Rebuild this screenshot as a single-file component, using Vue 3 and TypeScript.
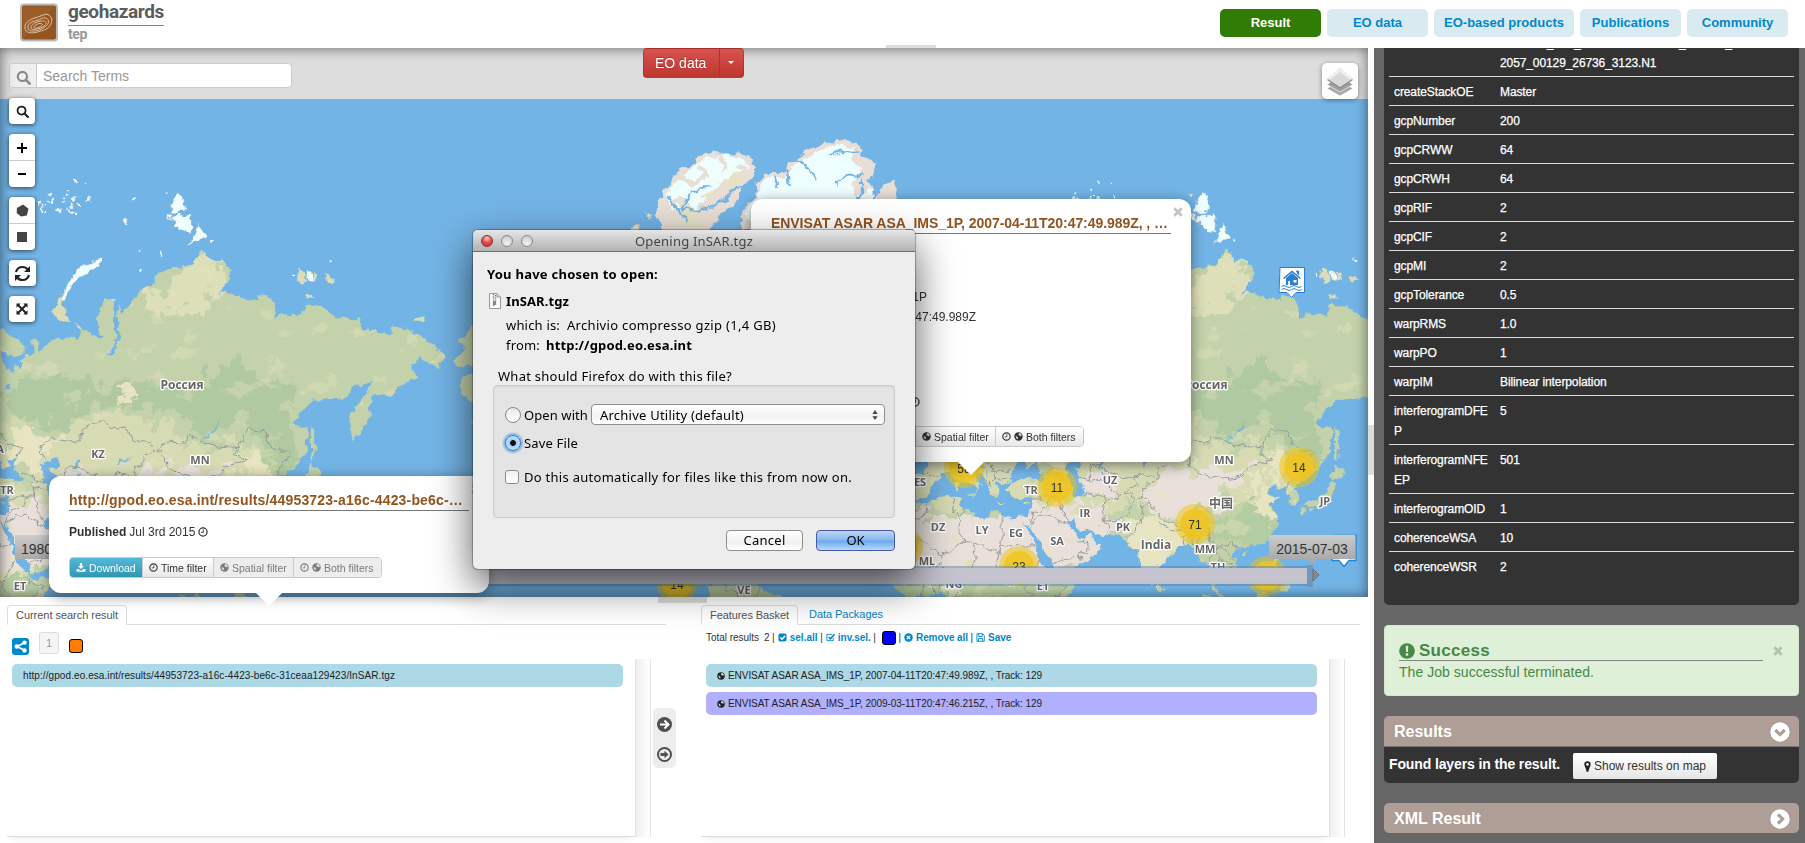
<script setup lang="ts">
type Pt = [number, number]

/* Web-Mercator projection at zoom level 2 (the world is 1024px wide). */
const WORLD = 1024
const ORIGIN_X = -93
const EQUATOR_Y = 610
const project = ([lon, lat]: Pt): string => {
  const x = ORIGIN_X + (lon * WORLD) / 360
  const rad = (lat * Math.PI) / 180
  const y = EQUATOR_Y - (WORLD / (2 * Math.PI)) * Math.log(Math.tan(Math.PI / 4 + rad / 2))
  return `${x.toFixed(1)},${y.toFixed(1)}`
}
const parse = (s: string): Pt[] => s.trim().split(/\s+/).map((p) => p.split(',').map(Number) as Pt)
const area = (s: string): string => 'M' + parse(s).map(project).join('L') + 'Z'
const line = (s: string): string => 'M' + parse(s).map(project).join('L')

const landSrc = [
  // Eurasia and Africa
  `20,69.8 25,71 31,70 36,69.2 41,67.8 41,66.6 38,66.1 34,66.7 32.5,67 34,65.5 35,64.3 38,63.9 37,65 40,64.6 40.5,65 39.8,65.6 42,66.4 44,66.1 44.2,67 43.5,68.5 46,68.2 46.5,67.8 45.5,66.9 47.5,66.9 49,67.8 53,68.6 54.5,68.3 58,68.9 60,68.4 61,69 60.5,69.8 64.5,69.3 68,68.4 69,69 67,69.6 66.8,71 68.5,72.5 70,73.2 72.8,72.8 72.5,71 73.5,68.3 71.5,66.6 69,66.3 72,66.2 74,67.2 74.5,68.5 74.3,70.5 73.5,71.5 75,72.7 75.5,71.5 78,72.3 80.5,73.6 87,74.7 87,75.2 93,76 100,76.3 104,77.6 107,76.6 111,76.7 113.7,75.8 113,75 109,73.6 106,73 110.5,73.9 114,73.6 119,73.1 123.5,73 123,73.7 127,73.5 129,72.3 129.5,71 132,71.6 134,71.4 139.5,71.5 140,72.5 146,72.3 152,71 159,70.9 160,69.7 165,69.6 170,69 170.5,70.1 176,69.8 180,69 185,67.8 190,66.1 188,65.6 187,64.3 182,65.3 180.8,66.2 179,65 177.5,64.7 179.5,62.8 177,62.5 174,61.7 170.5,60 166,60 163.2,59.8 162,57.9 163.2,56.1 161.8,55 160,53.2 158.5,52.2 156.7,51 155.7,53.5 155.6,56.8 158,58 161.8,60.3 164,62.5 160.3,61.8 156.8,61.6 154.3,59.6 149,59.4 142.5,59.2 137.5,56.3 135.2,54.7 138,53.8 140.5,53.9 141.3,52.8 140.5,50.5 140.4,48.5 138.3,46.3 135.5,43.8 132.5,42.9 130.7,42.3 129.7,41 127.5,39.7 129.3,37 129.3,35.4 126.5,34.4 126.5,37 125,38 125,39.6 121.5,38.9 122,40.6 118,39 119,37.3 122.5,37.2 119.3,35 121.8,32 121.8,30.8 122,29 119.5,25.5 116.8,23.1 113.8,22.3 110.5,21.2 108.3,21.6 106,19 107,17 109.2,13 109,11.6 106.8,10.4 105,8.8 105,10.2 102.6,12 100.9,13.4 100,13 99.3,10 100.3,8.3 103.3,4.5 104,1.4 101.3,2.8 100.2,6.3 98.4,8 98.7,11 97.7,15.5 96.5,17 94.5,16 94.3,18.5 92,21.5 90.5,22.6 87,21.5 85,19.5 82.3,16.6 80.2,15.2 80,12 79.8,10.3 78.2,8.9 77.5,8.1 76.3,10 74.5,14 73,17.5 72.8,21 70.8,20.8 69,22.3 70,22.8 67,24.8 61.6,25.2 57.5,25.7 56.8,27.1 54,26.6 51.5,27.9 50,30.2 48,30 48.5,28 50.2,26.6 50.8,24.8 51.2,26 51.6,25 54,24.1 56.3,26.2 56.8,24.3 59.8,22.5 57.8,19 55,17 52,15.6 45,12.8 43.3,12.7 42.8,16 39.1,21.2 37,25 35,28 34.9,29.5 34.2,27.8 32.6,29.9 33.8,27.2 35.7,24 37.2,21 37.4,18.8 39.7,15.3 43.2,12 43.3,11.5 44.5,10.4 51.3,11.8 50.8,9.5 47.8,4.5 43,0 41,-2 40,-4 9,-4 9.3,1 9.7,3.9 8.5,4.6 6,4.3 4.5,6.3 1.2,6.1 -2,4.8 -4.5,5.2 -7.5,4.4 -9.5,5.8 -11.5,6.9 -13.2,9 -15,11 -16.8,12.5 -17.4,14.7 -16.3,17 -17,21 -16,23.7 -13,27.7 -9.8,29.8 -9.8,31.5 -6.8,34 -5.5,35.9 -2,35.1 3,36.9 10,37.3 11,36.8 10.3,34.3 11.2,33.3 15,32.4 16,31.2 19,30.3 20.1,31.2 21.8,32.9 25,31.6 29,30.9 31,31.5 34.2,31.3 35.2,33 35.9,35.5 36,36.9 32.6,36.1 30.6,36.8 28.2,36.7 26.3,39.5 29,40.5 29.3,41.2 35,42 38.3,41 41.5,41.5 38,44.3 37,45.3 39,47.2 35,46.3 36.3,45.3 33.6,44.5 33,46 30.8,46.6 28.7,44 28,41.9 29,41.1 26,40.3 24,40.8 22.9,40.5 24,38 22.8,36.6 21.5,37.5 19.4,40.5 19.5,41.9 15.3,44 13.6,45.4 12.4,44.5 14,42.4 16.2,41.8 18.4,40 16.8,40.4 16.4,38.7 15.7,38 16,39.5 12.5,41.5 10.3,43.7 7.5,43.8 3.2,43.2 3.2,41.9 -0.3,39.5 -0.5,37.8 -2,36.7 -5.5,36.1 -8.9,37 -9.4,38.7 -8.9,43 -1.7,43.4 -1.2,46 -4.5,48.4 2,51 8,54 10,57 12,54.5 20,55 24,59`,
  // Americas
  `-168,65.6 -163,67 -166,68.3 -157,71.3 -128,70 -95,68 -80,62 -56,52 -70,42 -81,30 -98,26 -88,16 -83.2,15 -83.5,11 -81.5,9 -79.5,9.5 -77,8.5 -75,11 -71.5,12.3 -68,10.8 -62,10.7 -60,8.5 -57,6 -52,5 -51,0 -79,0 -77.3,4 -77.5,7 -79.5,8.4 -83,8.3 -85.7,11 -87.5,13 -92,14.5 -105,20 -125,40 -135,58 -150,60 -157.5,55.8 -162,55 -157.5,58.8 -162,58.7 -165,60.5 -166,61.7 -164.5,63 -161,64 -161,64.8 -166.5,64.6`,
  // Sakhalin, Hokkaido, Honshu, Kyushu
  '142,54.3 143.3,53 143,50.5 144.5,49 143,49.2 142.8,46.6 142,46 142,49 142,52.5',
  '141.8,45.4 145,44 145.5,43.2 143.3,42 140.3,42 140.3,43.2 141.6,43.3',
  '141.3,41.4 142,39.5 140.9,38 140.7,35.7 138.8,34.7 135.8,33.6 135,34.6 131,34 132.5,35.4 136,35.8 137,37.3 139.5,38.5 140,40.5',
  '130,33.7 131.8,33.5 131.3,31.4 130.2,31.3',
  '132.5,33.8 134.4,34.2 134,33.3 132.8,32.8',
  // Taiwan, Hainan, Luzon, Mindanao, Borneo, Sumatra, Sri Lanka
  '121.5,25.2 121.8,24.5 120.9,22 120.2,23',
  '109,19.9 110.8,20 110,18.5 108.8,18.8',
  '120.6,18.4 122.2,18.4 121.5,16 123.8,13.5 123.8,12.8 121,13.8 120.2,15',
  '122,7 123.5,8.6 125.4,9.7 126.4,7.5 125.5,6 124,6.8',
  '122.2,11.5 123,11.2 124.4,12 125.3,11.5 124.8,10.2 123.3,9.5 122.3,10.2',
  '117.2,8.4 119.4,11.2 119.2,10.5 117.7,8.6',
  '109,1.5 113,3.2 117,7 119,5.2 117.8,3 118,0 109,0',
  '95.3,5.6 97.5,5.2 103,0 99,0',
  '80,9.7 81.8,7.5 80.6,6 79.8,7.8',
  // Mediterranean islands
  '12.5,38 15.6,38.2 15.1,36.7',
  '8.2,40.9 9.7,40.9 9.5,39.1 8.5,39',
  '8.6,42.4 9.4,43 9.4,41.5',
  '23.6,35.5 26.3,35.2 24.8,34.9',
  '32.4,35 34.5,35.6 33.5,34.7',
]
const land = landSrc.map(area).join('')

const terrain: { fill: string; d: string }[] = [
  { fill: '#b0c9a0', src: '33,60 45,64 60,63 75,62 90,61 105,62 110,64 116,68 119,66 120,63 135,62 135,50 139,46 131,42.8 128,48 124,53 115,55 105,52 98,56 85,58 75,58 60,58 57,53 50,55 38,56' },
  { fill: '#d6dbb4', src: '-12,48 20,50 40,50 55,54 75,57 90,55 100,50 115,51 125,48 129,40 124,34 110,34 104,38 90,44 75,35 45,33 30,36 -12,34' },
  { fill: '#e7e4c1', src: '33,52 45,53 57,52 50,47 42,44 36,46' },
  { fill: '#e7e4c1', src: '68,30 78,32 88,26 92,24 86,20 80,8 72,8' },
  { fill: '#e7e4c1', src: '113,40 122,42 124,30 113,30' },
  { fill: '#e7e4c1', src: '118,48 126,48 127,43 120,43' },
  { fill: '#e7e4c1', src: '72,60 78,61 80,59 74,58' },
  { fill: '#dcdfb8', src: '86,73 95,76 105,78 114,76 112,74 100,72 88,71' },
  { fill: '#dfe0ba', src: '-18,17 40,17 44,8 -18,10' },
  { fill: '#e8e0d9', src: '-18,17.5 -4,15 40,15 60,14 62,25 60,34 47,36 36,34 20,32 5,34 -9,29 -18,22' },
  { fill: '#e8e0d9', src: '75,41 88,45 98,44 112,45 108,40 104,38 100,33 88,28.5 78,32 74,37' },
  { fill: '#e8e0d9', src: '53,44 62,44 68,43 64,38 54,38' },
  { fill: '#e8e0d9', src: '58,26 67,26 67,31 60,36 52,34' },
  { fill: '#b4cca2', src: '104,33 112,34 121,30 121,24 108,21 98,20 97,28' },
  { fill: '#c0d1a7', src: '94,26 110,22 110,8 98,6' },
  { fill: '#b8cda3', src: '-18,9.5 30,9 45,7 45,-5 -18,-5' },
  { fill: '#b4cca2', src: '35,14 42,13 42,6 35,5' },
  { fill: '#c4d2ab', src: '125,41 130,42 130,34 126,34' },
  { fill: '#c4d2ab', src: '40,44 49,41 50,38 47,38 38,41' },
  { fill: '#b4cca2', src: '-90,15 -77,9 -50,5 -50,-5 -85,-5' },
].map((t) => ({ fill: t.fill, d: area(t.src) }))

const lakes = [
  '47,45 51,47 53,46.8 53,45 50.3,44.5 52.5,42 54,40 54,37 50,37.4 49,40 47.5,43',
  '104,51.5 107,52.3 109.7,55.6 109,53.2 106,51.6',
  '74,45.5 74.5,46.7 79,46.6 75.5,46.2 74.5,45',
  '58.5,45 60,46.5 61.5,46.3 60,45.6 59.5,44',
  '34.5,61 35.8,62.3 36,61',
  '60,42.8 60.4,43.6 61,43',
].map(area).join('')

const borders = [
  '46.5,48.5 47,50 51,51.6 55,51 58,51 61,51 61.5,53 62,54 69,55.3 71,54.2 74,53.7 77,54 80,51 84,51 87,49.2 83,47 82,45.2 80,45 80.2,42.2 74,43 71,42.3 67,41.5 66,42.9 61,44.3 58.5,45.5 56,45 56,41.3 52.5,42',
  '46.5,48.5 49,46.5',
  '87.8,49.2 92,50.7 98,50.5 98.3,52.1 102,51.4 107,50 113,49.6 116.7,49.8 115.5,47.8 119.8,46.7 112,45 109,42.5 104,41.9 96,42.8 91,45.1 90.8,47 87.8,49.2',
  '116.7,49.8 118,52 120,53.5 125.5,53 127.5,50 130.5,48.8 135,48.3 131,45 130.7,42.4 127,41.6 124.5,40',
  '80.2,42.2 74,39.5 75,37 79,33 81,30.3 88.9,27.6 92,27.7 97.5,28.3 97.5,24 101,21.5 105,23 108,21.6',
  '80.3,30 80.3,29 84,27.4 88,26.5 88.9,27.6',
  '68.2,23.8 70.5,25.8 72,28 74.5,31 74,34 77,35.5',
  '61.6,25.2 63,27.2 61,29.8 66,30 69.5,32 71,36 75,37',
  '61,29.8 60.6,33 61.2,36.5 56,38 54,37.3',
  '61.2,35.6 64.5,36.3 67,37.3 71,38 71.5,36.8',
  '56,41.3 60,42 62,40 66.5,37.4',
  '68,38 70,40 73,40 71,42 74,43',
  '48,30 46,33 45,36 44.5,39.5 48,38.8',
  '36,36.2 42,37.2 44.8,37.2 44.3,39.8 43.5,41.2 46.5,41.5 48.5,41.8',
  '40,43.4 43,42.8 46.5,41.5',
  '35,29.3 38,31.5 42,31.2 46.5,29.1 48.4,28.5',
  '35,29.4 35.8,32.7 39,33.3 41,34.5 42.3,37.2',
  '42.8,16.4 46,17.2 52,19 55,20 55.2,22.7 51.5,24',
  '52,19 53,16.6',
  '25,31.6 25,22 36.8,22',
  '11.5,33.2 10,30.5 9.8,26.5 12,23.5 15,23 24,19.5 24,22 25,22',
  '8.5,36.9 7.6,33.5 10,30.5',
  '-2,35.1 -1.3,32.2 -8.7,28.7 -8.7,27.3 -4.8,25 3.2,19 4.2,19.1 12,23.5',
  '-4.8,25 -6,15.6 -12,15',
  '4.2,19.1 4,16 0,15 -5,12',
  '15,23 15.5,17 13.5,13.7 4,13.5 4,16',
  '24,19.5 22.5,14 24,9 34,10 36.5,14.5 38.5,18',
  '34,10 33,8 36,4.5 42,4 45,5.5 48,8 43,9.5 43,11',
  '13.5,13.7 14,11 10,7 8.6,4.8',
  '2.7,6.4 3.6,11.7 4,13.5',
  '-5,12 -2.5,9.5 -3,5',
  '-2.5,11 0,11 1,6',
  '92.3,21 94.6,25 97,28',
  '89,22 88.5,25 92,25 92.3,22',
  '97.8,18 98.5,14 99,10.5',
  '97.8,18 100,20.3 101,21.5',
  '100,20.3 101,17.5 105,16 105.5,14.5 102.6,14 102.6,12',
  '102,22.4 105,19 107.5,15 106,11',
  '20,46 22,44 28,44',
  '22,44 22.5,41.3 26.5,41.8 28,42',
  '19.4,42 20.5,40 21,41 22.5,41.3',
  '15,45.5 19,45 20,42.5',
  '-1.7,43.4 3.1,42.4',
  '-7,42 -7,38 -7.4,37.2',
  '7.5,43.8 7,46',
  '32,52.3 34,52 36,50.3 40,49.5 39,47.5',
  '-72,12 -72.5,7.5 -67.5,6 -67,1',
  '-60,8 -61,5 -64,4',
].map(line).join('')

/* Arctic shapes, in the coordinates of the first world copy. */
const iceIslands =
  'M179 192l5 9 1 9-7 3-8-1 2-10zM176 216l5-2 1 4 7-5 2 5v14l-6-1-9-5v-5l-5-1zM166 214l6 1-1 4-4-2zM199 224l3 7 4 3v5l-7 2-9 3 5-9zM164 193l4 1-2 2z' +
  'M100 257l3 3-3 5-9 5-11 6-8 9-5 8-3 7-3-4 5-10 8-13 9-8 9-3zM307 270l4 4 2 5-6 1z'
const paleIslands =
  'M64 290l2 3-3 8 1 6 2 8 5 7-9-1-7-4-2-5 4-11zM298 268l6 2 2 6-2 7-4 1-3-7zM313 272l5 2 1 5-6 1zM324 275l6 2 6 4-8 2zM307 294l6 1 2 4-9-1zM417 316l8 1-2 4-8-1zM108 299h8l-2 3zM74 322l9 7-5-1z'
const specks: Pt[] = [
  [39, 204], [43, 207], [47, 202], [52, 200], [46, 211], [42, 209], [58, 210], [65, 198], [69, 195], [73, 199], [70, 203],
  [68, 190], [74, 182], [86, 184], [67, 209], [72, 211], [79, 203], [81, 205], [88, 200], [90, 197], [133, 200], [126, 221],
  [76, 214], [141, 250], [140, 271], [161, 254], [63, 201], [71, 206], [331, 261], [293, 274], [211, 241], [51, 194],
]
const ellesmere =
  'M657 213L660 199L664 190L670 187L675 173L684 167L696 163L698 157L706 153L716 152L731 155L739 152L748 156L756 168L756 174L749 182L742 187L738 200L728 210L720 213L716 222L709 232H664L660 222Z'
const greenland =
  'M740 212L748 205L757 197L755 183L768 173L783 173L788 165L796 160L804 152L815 149L822 143L842 139L857 143L861 150L860 155L870 159L874 165L870 177L866 180L879 192L886 182L893 181L898 189L893 205L890 300H760V230H742Z'

const labels: { t: string; x: number; y: number; big?: boolean }[] = [
  { t: 'Россия', x: 182, y: 389, big: true },
  { t: 'KZ', x: 98, y: 458 },
  { t: 'MN', x: 200, y: 464 },
  { t: 'TR', x: 7, y: 494 },
  { t: 'ET', x: 20, y: 590 },
  { t: 'UA', x: -4, y: 453 },
  { t: 'Россия', x: 1206, y: 389, big: true },
  { t: 'MN', x: 1224, y: 464 },
  { t: 'TR', x: 1031, y: 494 },
  { t: 'UZ', x: 1110, y: 484 },
  { t: 'IR', x: 1085, y: 517 },
  { t: 'PK', x: 1123, y: 531 },
  { t: 'India', x: 1156, y: 549, big: true },
  { t: 'MM', x: 1205, y: 553 },
  { t: '中国', x: 1221, y: 508, big: true },
  { t: 'JP', x: 1325, y: 505 },
  { t: 'SA', x: 1057, y: 545 },
  { t: 'EG', x: 1016, y: 537 },
  { t: 'LY', x: 982, y: 534 },
  { t: 'DZ', x: 938, y: 531 },
  { t: 'ES', x: 920, y: 486 },
  { t: 'ML', x: 927, y: 565 },
  { t: 'NG', x: 954, y: 588 },
  { t: 'ET', x: 1043, y: 590 },
  { t: 'TH', x: 1218, y: 571 },
  { t: 'VE', x: 744, y: 594 },
]

const clusters = [
  { n: '58', x: 964, y: 468 },
  { n: '11', x: 1057, y: 487 },
  { n: '14', x: 1299, y: 467 },
  { n: '71', x: 1195, y: 524 },
  { n: '23', x: 1019, y: 566 },
  { n: '', x: 1267, y: 576 },
  { n: '', x: 903, y: 547 },
  { n: '14', x: 677, y: 584 },
]

const nav = ['Result', 'EO data', 'EO-based products', 'Publications', 'Community']
const params: [string, string][] = [
  ['createStackOE', 'Master'], ['gcpNumber', '200'], ['gcpCRWW', '64'], ['gcpCRWH', '64'], ['gcpRIF', '2'],
  ['gcpCIF', '2'], ['gcpMI', '2'], ['gcpTolerance', '0.5'], ['warpRMS', '1.0'], ['warpPO', '1'],
  ['warpIM', 'Bilinear interpolation'], ['interferogramDFEP', '5'], ['interferogramNFEEP', '501'],
  ['interferogramOID', '1'], ['coherenceWSA', '10'], ['coherenceWSR', '2'],
]
const basket = [
  { text: 'ENVISAT ASAR ASA_IMS_1P, 2007-04-11T20:47:49.989Z, , Track: 129', cls: 'blue' },
  { text: 'ENVISAT ASAR ASA_IMS_1P, 2009-03-11T20:47:46.215Z, , Track: 129', cls: 'violet' },
]

/* Tracks a text run so that it fills the given width. */
const vFit = {
  mounted(el: HTMLElement, binding: { value: number }) {
    const n = (el.textContent ?? '').trim().length
    const w = el.getBoundingClientRect().width
    if (n > 1) el.style.letterSpacing = `${((binding.value - w) / n).toFixed(3)}px`
  },
}
</script>

<template>
  <div class="app">
    <svg class="sprite" width="0" height="0">
      <defs>
        <symbol id="i-clock" viewBox="0 0 12 12"><circle cx="6" cy="6" r="4.9" fill="none" stroke="currentColor" stroke-width="1.5" /><path d="M6.4 3v3.5H3.8" fill="none" stroke="currentColor" stroke-width="1.1" /></symbol>
        <symbol id="i-globe" viewBox="0 0 12 12"><circle cx="6" cy="6" r="5.6" fill="currentColor" /><path d="M6.6 1.2l2.6.9 1.300 2.200-1.600 1.800-.9-1.600-1.600.4-.4-1.400zM2.200 5l2.200 1.300 1 1.500-.6 2-1.500-.8-.7-1.800z" fill="#fff" opacity=".8" /></symbol>
        <symbol id="i-download" viewBox="0 0 12 12"><path d="M4.500 0h3v4H10L6 8 2 4h2.500zM0 8h3l2 2h2l2-2h3v3.500H0z" fill="currentColor" /></symbol>
        <symbol id="i-search" viewBox="0 0 14 14"><circle cx="6" cy="6" r="4.300" fill="none" stroke="currentColor" stroke-width="2" /><path d="M9.200 9.200l3.600 3.600" stroke="currentColor" stroke-width="2.300" stroke-linecap="round" /></symbol>
        <symbol id="i-x" viewBox="0 0 10 10"><path d="M1.300 1.300l7.400 7.400M8.700 1.300L1.300 8.700" stroke="currentColor" stroke-width="2.800" /></symbol>
        <symbol id="i-down" viewBox="0 0 20 20"><circle cx="10" cy="10" r="9.700" fill="#fff" /><path d="M5.300 8l4.700 4.600L14.700 8" fill="none" stroke="#ae9e96" stroke-width="3.200" /></symbol>
        <symbol id="i-right" viewBox="0 0 20 20"><circle cx="10" cy="10" r="9.700" fill="#fff" /><path d="M8 5.300l4.600 4.700L8 14.700" fill="none" stroke="#ae9e96" stroke-width="3.200" /></symbol>
      </defs>
    </svg>

    <header class="header">
      <div class="brand">
        <svg class="logo" viewBox="0 0 38 38">
          <rect x="1" y="1" width="36" height="36" rx="3" fill="#955520" stroke="#b9b9b9" stroke-width="2" />
          <path d="M3 3h32L3 35z" fill="#a26a3a" opacity=".45" />
          <g fill="none" stroke="#e4cdb8" stroke-width=".9">
            <path d="M5 25c-1-5 4-9 11-11 5-1 8-4 12-3 4 2 5 7 2 11-3 5-9 5-14 7-6 1-10 0-11-4z" />
            <path d="M8 25c-1-4 3-7 9-8 4-1 7-4 10-2 3 3 1 7-3 9-4 3-14 6-16 1z" />
            <path d="M11 24c0-3 4-5 8-6 4 0 6-2 7 1 0 3-3 5-7 6-3 1-8 2-8-1z" />
            <path d="M14 24c0-2 3-3 5-4 3 0 4 0 3 2-1 1-7 4-8 2z" />
          </g>
        </svg>
        <div class="brand-text">
          <div class="brand-name"><span v-fit="96">geohazards</span></div>
          <div class="brand-sub"><span v-fit="19">tep</span></div>
        </div>
      </div>
      <nav class="nav">
        <a v-for="(n, i) in nav" :key="n" :class="['nav-item', { active: i === 0, wide: i === 2 }]">{{ n }}</a>
      </nav>
      <div class="grip-top"></div>
    </header>

    <div class="body">
      <div class="left">
        <section class="map">
          <svg class="canvas" viewBox="0 48 1368 549" width="1368" height="549">
            <defs>
              <filter id="coast" x="-160" y="48" width="1900" height="560" filterUnits="userSpaceOnUse" color-interpolation-filters="sRGB">
                <feTurbulence type="fractalNoise" baseFrequency=".13" numOctaves="3" seed="4" />
                <feDisplacementMap in="SourceGraphic" scale="8" xChannelSelector="R" yChannelSelector="G" />
              </filter>
              <filter id="patch" x="-200" y="48" width="1300" height="600" filterUnits="userSpaceOnUse" color-interpolation-filters="sRGB">
                <feTurbulence type="fractalNoise" baseFrequency=".05" numOctaves="4" seed="9" />
                <feDisplacementMap in="SourceGraphic" scale="46" xChannelSelector="R" yChannelSelector="G" />
              </filter>
              <filter id="mottle" x="-200" y="48" width="1300" height="600" filterUnits="userSpaceOnUse" color-interpolation-filters="sRGB">
                <feTurbulence type="fractalNoise" baseFrequency=".035 .05" numOctaves="5" seed="21" />
                <feColorMatrix values="0 0 0 0 .9  0 0 0 0 .89  0 0 0 0 .75  14 0 0 0 -9" />
              </filter>
              <clipPath id="land-clip"><path :d="land" /></clipPath>
              <g id="world">
                <path :d="land" fill="#c4d2ab" />
                <g clip-path="url(#land-clip)">
                  <g filter="url(#patch)"><path v-for="(t, i) in terrain" :key="i" :d="t.d" :fill="t.fill" /></g>
                  <rect x="-200" y="300" width="1300" height="320" filter="url(#mottle)" opacity=".4" />
                </g>
                <path :d="lakes" fill="#73b4e6" />
                <path :d="paleIslands" fill="#d8dcb8" />
                <path :d="iceIslands" fill="#eefdfd" stroke="#e0dcd8" stroke-width=".5" />
                <circle v-for="(s, i) in specks" :key="i" :cx="s[0]" :cy="s[1]" :r="i % 3 ? 1.3 : 2" fill="#e9f5f4" />
                <path :d="borders" fill="none" stroke="#8e9499" stroke-width=".9" />
              </g>
            </defs>
            <rect y="48" width="1368" height="549" fill="#73b4e6" />
            <g filter="url(#coast)">
              <use href="#world" />
              <use href="#world" x="1024" />
              <path :d="ellesmere" fill="#e8ded6" />
              <path d="M665 196l16-20 16-12 8-6 16-3 20 3 8 8-8 8-20 8-16 18-16 12-16-2z" fill="#eefdfd" />
              <path d="M680 176l14 8 14-10M698 166l10 10M720 156l6 14M736 166l10 2M670 206l10-8 8 6 8 20" fill="none" stroke="#e8ded6" stroke-width="4" />
              <path d="M732 172l14 2-6 10-14 4zM678 200l14 6 10 22h-14zM700 196l20-8-10 10z" fill="#e6e3c4" />
              <path d="M667 196l10 12 18 2 20-4 16-10M677 208l12 16M690 194l-8 14M752 182l-20 8-12 14M690 192l18-5" fill="none" stroke="#73b4e6" stroke-width="2.200" />
              <path :d="greenland" fill="#e8ded6" />
              <path d="M744 214l14-18 2-12 12-8 12 2 12-14 20-12 20-8 18 4-4 12 12 8-6 12-6 6 8 10 10-6 8 0-2 18v120H770v-80z" fill="#eefdfd" />
              <path d="M796 160l14 10 6 9M786 168l4 16M774 176l4 12M828 156l14-5 16 1M836 184l8-8 20-1M862 178v16l-6 8M878 190l-10 12" fill="none" stroke="#73b4e6" stroke-width="2.200" />
              <path d="M631 226l6-3 3 7-9 1zM646 212l4 4-2 4z" fill="#e3ddc9" />
            </g>
            <g class="labels">
              <text v-for="l in labels" :key="l.t + l.x" :x="l.x" :y="l.y" :class="{ big: l.big }">{{ l.t }}</text>
            </g>
            <g v-for="(c, i) in clusters" :key="i" class="cluster">
              <circle :cx="c.x" :cy="c.y" r="20" fill="#f0c20c" opacity=".5" />
              <circle :cx="c.x" :cy="c.y" r="15" fill="#efc620" opacity=".85" />
              <text v-if="c.n" :x="c.x" :y="c.y + 5">{{ c.n }}</text>
            </g>
            <g>
              <path d="M1280 267.500h24.500v25h-8.500l-4.500 5-4.500-5h-8z" fill="#fff" stroke="#2b7fd0" />
              <g stroke="#2b7fd0" fill="none">
                <path d="M1283.500 278.500l8.500-7 8.500 7" stroke-width="1.600" />
                <path d="M1286 278l6-5 6 5v7h-12z" fill="#2b7fd0" stroke="none" />
                <path d="M1296.500 271h2v4z" fill="#2b7fd0" />
                <path d="M1281.500 286.500q2.500-2 5 0t5 0 5 0 5 0M1281.500 289.500q2.500-2 5 0t5 0 5 0 5 0" />
                <path d="M1293.500 280h3v2.500h-3zM1288 281h2v4h-2z" fill="#fff" stroke="none" />
              </g>
              <path d="M1332 535.500h24v25h-7l-5 6-5-6h-7z" fill="#fff" stroke="#1f86d6" stroke-width="1.300" />
            </g>
            <g>
              <rect x="50" y="566" width="1257" height="20" fill="#4d7ba8" opacity=".45" />
              <rect x="50" y="568" width="1257" height="16" fill="#c4c3ce" />
              <rect x="1307" y="565" width="6" height="22" fill="#7397b8" />
              <path d="M1313 569l6 6-6 6z" fill="#8a8a8a" stroke="#666" stroke-width=".8" />
            </g>
          </svg>

          <div class="slide-label start">1980</div>
          <div class="slide-label end">2015-07-03</div>
          <div class="toolbar">
            <div class="search">
              <span class="addon"><svg width="15" height="15"><use href="#i-search" /></svg></span>
              <span class="field">Search Terms</span>
            </div>
            <div class="split">
              <span class="split-main">EO data</span><span class="split-caret"><i></i></span>
            </div>
          </div>
          <div class="inner-shadow"></div>
          <div class="layers">
            <svg width="28" height="30" viewBox="0 0 28 30">
              <path d="M14 13L1 21.500 14 29l13-7.500z" fill="#a9a9a9" stroke="#fff" stroke-width=".7" />
              <path d="M14 9L1 17.500 14 25l13-7.500z" fill="#9c9c9c" stroke="#fff" stroke-width=".7" />
              <path d="M14 1L1 13 14 21.500 27 13z" fill="#8f8f8f" />
              <path d="M14 1L1 11.500 14 20l13-8.500z" fill="#d9d9d9" />
              <path d="M14 1L1 11.500l3 1L14 5l10 7.500 3-1z" fill="#efefef" />
            </svg>
          </div>
          <div class="tools">
            <div class="tool-group"><span><svg width="13" height="13"><use href="#i-search" /></svg></span></div>
            <div class="tool-group"><span class="sign"><svg width="12" height="12" viewBox="0 0 12 12"><path d="M1 6h10M6 1v10" stroke="#000" stroke-width="2" /></svg></span><span><svg width="10" height="12" viewBox="0 0 10 12"><path d="M1 6h8" stroke="#000" stroke-width="2" /></svg></span></div>
            <div class="tool-group"><span><svg width="13" height="13" viewBox="0 0 13 13"><path d="M7 .5l5.500 4.200-1.700 6.800-5.800 1L.7 9 .9 4z" fill="#444" /></svg></span><span><svg width="10" height="10"><rect width="10" height="10" fill="#444" /></svg></span></div>
            <div class="tool-group wide"><span><svg width="17" height="17" viewBox="0 0 17 17"><path d="M2 7c1-3.500 3.500-5 6.500-5 2 0 4 .8 5.300 2.500M15 10c-1 3.500-3.500 5-6.500 5-2 0-4-.8-5.300-2.500" fill="none" stroke="#222" stroke-width="2.200" /><path d="M16 1v6h-6zM1 16v-6h6z" fill="#222" /></svg></span></div>
            <div class="tool-group"><span><svg width="12" height="12" viewBox="0 0 12 12"><path d="M2 2l8 8M10 2l-8 8" stroke="#222" stroke-width="2" /><path d="M.5.500h4.200L.5 4.700zM11.500.500v4.200L7.300.500zM.5 11.500V7.300l4.200 4.200zM11.500 11.500H7.300l4.200-4.200z" fill="#222" /></svg></span></div>
          </div>
        </section>

        <section class="bottom">
          <div class="panel">
            <div class="tabs"><span class="tab on"><b v-fit="102">Current search result</b></span></div>
            <div class="bar bar-left">
              <span class="share"><svg width="13" height="13" viewBox="0 0 13 13"><path d="M11 2.500L3 6.500l8 4" fill="none" stroke="#fff" stroke-width="1.600" /><circle cx="10.500" cy="2.600" r="2.200" fill="#fff" /><circle cx="2.800" cy="6.500" r="2.300" fill="#fff" /><circle cx="10.500" cy="10.400" r="2.200" fill="#fff" /></svg></span>
              <span class="page">1</span>
              <span class="swatch orange"></span>
            </div>
            <div class="list">
              <div class="rows"><div class="row blue"><span v-fit="372">http://gpod.eo.esa.int/results/44953723-a16c-4423-be6c-31ceaa129423/InSAR.tgz</span></div></div>
              <div class="track"></div>
            </div>
          </div>
          <div class="mover-col">
            <div class="grip-mid"></div>
            <div class="mover">
              <svg width="15" height="15" viewBox="0 0 15 15"><circle cx="7.500" cy="7.500" r="7.500" fill="#505050" /><path d="M3 7.500h8M7.500 3.500l4 4-4 4" fill="none" stroke="#fff" stroke-width="2" /></svg>
              <svg width="15" height="15" viewBox="0 0 15 15"><circle cx="7.500" cy="7.500" r="6.500" fill="none" stroke="#505050" stroke-width="2" /><path d="M3.500 6h4V3.800l4 3.700-4 3.700V9h-4z" fill="#505050" /></svg>
            </div>
          </div>
          <div class="panel">
            <div class="tabs"><span class="tab on feat"><b v-fit="79">Features Basket</b></span><span class="tab link"><b v-fit="74">Data Packages</b></span></div>
            <div class="bar bar-right">
              <span v-fit="53">Total results</span><span class="two">2</span><i>|</i>
              <svg class="ic" viewBox="0 0 10 10"><rect x=".5" y=".5" width="9" height="9" rx="2" fill="#08c" /><path d="M2.500 5l2 2 3.500-4" fill="none" stroke="#fff" stroke-width="1.500" /></svg><a v-fit="28">sel.all</a><i>|</i>
              <svg class="ic" viewBox="0 0 10 10"><path d="M8 5.500v3H1v-7h6" fill="none" stroke="#08c" /><path d="M2.800 4.500l2 2L9.500 1.500" fill="none" stroke="#08c" stroke-width="1.600" /></svg><a v-fit="33">inv.sel.</a><i>|</i>
              <span class="swatch indigo"></span><i>|</i>
              <svg class="ic" viewBox="0 0 10 10"><circle cx="5" cy="5" r="4.700" fill="#08c" /><path d="M3.200 3.200l3.600 3.600M6.800 3.200L3.200 6.800" stroke="#fff" stroke-width="1.500" /></svg><a v-fit="52">Remove all</a><i>|</i>
              <svg class="ic" viewBox="0 0 10 10"><path d="M1 .8h6.500L9.200 2.500v6.700H1zM3 .8v3h4v-3M2.800 9V6h4.600v3" fill="none" stroke="#08c" /></svg><a v-fit="23">Save</a>
            </div>
            <div class="list">
              <div class="rows">
                <div v-for="b in basket" :key="b.text" :class="['row', 'globe', b.cls]"><svg width="8" height="8"><use href="#i-globe" /></svg><span v-fit="314">{{ b.text }}</span></div>
              </div>
              <div class="track"></div>
            </div>
          </div>
        </section>
      </div>

      <div class="gutter"><div class="grip-side"></div></div>

      <aside class="side">
        <div class="params">
          <div class="param first"><span></span><span class="file"><em>ASA_IMS_1PNUPA20070411_204749_0000001</em><br>2057_00129_26736_3123.N1</span></div>
          <div v-for="p in params" :key="p[0]" class="param"><span>{{ p[0] }}</span><span>{{ p[1] }}</span></div>
        </div>
        <div class="alert">
          <div class="alert-main">
            <div class="alert-title"><svg width="16" height="16" viewBox="0 0 16 16"><circle cx="8" cy="8" r="7.800" fill="#468847" /><path d="M6.700 2.800h2.600l-.4 6.200H7.100zM6.800 10.300h2.400v2.500H6.800z" fill="#dff0d8" /></svg><span v-fit="71">Success</span></div>
            <div class="alert-text"><span v-fit="195">The Job successful terminated.</span></div>
          </div>
          <svg class="alert-x" width="10" height="10"><use href="#i-x" /></svg>
        </div>
        <div class="acc">
          <div class="acc-head"><span>Results</span><svg width="20" height="20"><use href="#i-down" /></svg></div>
          <div class="acc-body"><b v-fit="171">Found layers in the result.</b>
            <span class="map-btn"><svg width="7" height="11" viewBox="0 0 7 11"><path d="M3.500.200a3.200 3.200 0 0 1 3.200 3.300c0 1.600-1.700 3.500-2.300 7.200H2.600C2 7 .3 5.100.3 3.500A3.200 3.200 0 0 1 3.500.200z" fill="#222" /><circle cx="3.500" cy="3.400" r="1.300" fill="#fff" /></svg><span v-fit="112">Show results on map</span></span>
          </div>
        </div>
        <div class="acc closed">
          <div class="acc-head"><span>XML Result</span><svg width="20" height="20"><use href="#i-right" /></svg></div>
        </div>
      </aside>
    </div>

    <div class="popup p-right">
      <svg class="popup-x" width="10" height="10"><use href="#i-x" /></svg>
      <div class="popup-title"><span v-fit="397">ENVISAT ASAR ASA_IMS_1P, 2007-04-11T20:47:49.989Z, , …</span></div>
      <div class="meta m1">ASA_IMS_1P</div>
      <div class="meta m2">2007-04-11T20:47:49.989Z</div>
      <div class="meta m3"><svg width="10" height="10"><use href="#i-clock" /></svg></div>
      <div class="btns">
        <span class="btn info w1"><svg><use href="#i-download" /></svg>Download</span>
        <span class="btn w2"><svg><use href="#i-clock" /></svg>Time filter</span>
        <span class="btn w3"><svg><use href="#i-globe" /></svg>Spatial filter</span>
        <span class="btn w4"><svg><use href="#i-clock" /></svg><svg class="second"><use href="#i-globe" /></svg>Both filters</span>
      </div>
    </div>

    <div class="popup p-left">
      <svg class="popup-x" width="10" height="10"><use href="#i-x" /></svg>
      <div class="popup-title"><span v-fit="394">http://gpod.eo.esa.int/results/44953723-a16c-4423-be6c-…</span></div>
      <div class="published"><b>Published</b> Jul 3rd 2015 <svg width="10" height="10"><use href="#i-clock" /></svg></div>
      <div class="btns">
        <span class="btn info w1"><svg><use href="#i-download" /></svg>Download</span>
        <span class="btn w2"><svg><use href="#i-clock" /></svg>Time filter</span>
        <span class="btn off w3"><svg><use href="#i-globe" /></svg>Spatial filter</span>
        <span class="btn off w4"><svg><use href="#i-clock" /></svg><svg class="second"><use href="#i-globe" /></svg>Both filters</span>
      </div>
    </div>

    <div class="dialog">
      <div class="titlebar">
        <div class="lights"><i class="red"></i><i></i><i></i></div>
        <span v-fit="118">Opening InSAR.tgz</span>
      </div>
      <div class="d-body">
        <div class="d-line l1"><b v-fit="171">You have chosen to open:</b></div>
        <div class="d-line l2">
          <svg width="12" height="16" viewBox="0 0 12 16"><path d="M.5.500h7.500l3.500 3.500v11.500H.5z" fill="#fafafa" stroke="#999" /><path d="M8 .5v3.500h3.500" fill="#ddd" stroke="#999" /><path d="M4.500 1v12M6.500 2v11" stroke="#777" stroke-width="1.400" stroke-dasharray="1.200 1" /><rect x="4" y="8" width="3" height="4" fill="#888" /></svg>
          <b v-fit="63">InSAR.tgz</b>
        </div>
        <div class="d-line l3"><span v-fit="54">which is:</span><span v-fit="209" class="gap7">Archivio compresso gzip (1,4 GB)</span></div>
        <div class="d-line l4"><span v-fit="34">from:</span><b v-fit="146" class="gap6">http://gpod.eo.esa.int</b></div>
        <div class="d-line l5"><span v-fit="234">What should Firefox do with this file?</span></div>
        <div class="group">
          <div class="opt o1"><i class="radio"></i><span v-fit="64">Open with</span><div class="select"><span v-fit="144">Archive Utility (default)</span><svg width="6" height="12" viewBox="0 0 6 12"><path d="M3 1l2.600 4H.4zM3 11L.4 7.300h5.200z" fill="#444" /></svg></div></div>
          <div class="opt o2"><i class="radio on"></i><span v-fit="54">Save File</span></div>
          <div class="opt o3"><i class="check"></i><span v-fit="328">Do this automatically for files like this from now on.</span></div>
        </div>
        <div class="actions"><span class="push cancel"><span v-fit="42">Cancel</span></span><span class="push ok">OK</span></div>
      </div>
    </div>
  </div>
</template>

<style>
html, body { margin: 0; background: #fff; overflow: hidden; }
</style>

<style scoped>
* { box-sizing: border-box; }
.app { position: relative; width: 1805px; height: 843px; overflow: hidden; display: flex; flex-direction: column; background: #fff; color: #333; font-family: "Liberation Sans", Arial, "Noto Sans CJK SC", sans-serif; white-space: nowrap; }
.sprite { position: absolute; }
i, em { font-style: normal; }
svg { display: block; flex: none; }

.header { position: relative; height: 48px; flex: none; display: flex; justify-content: space-between; background: #fff; }
.brand { display: flex; padding: 3px 0 0 20px; }
.logo { width: 38px; height: 39px; }
.brand-text { margin-left: 10px; font-family: Roboto, sans-serif; font-weight: 700; }
.brand-name { width: 96px; height: 23px; font-size: 19px; line-height: 18px; color: #5c5c5c; border-bottom: 1px solid #b8794a; }
.brand-sub { font-size: 14px; line-height: 16px; color: #999; }
.nav { display: flex; gap: 6px; padding: 9px 17px 0 0; }
.nav-item { width: 101px; height: 28px; border-radius: 5px; background: #d9eaf1; color: #08c; font-size: 13px; font-weight: 700; line-height: 27px; text-align: center; }
.nav-item.wide { width: 140px; }
.nav-item.active { background: #307d06; color: #fff; }
.grip-top { position: absolute; left: 886px; bottom: 0; width: 50px; height: 3px; background: #ddd; }

.body { flex: 1; display: flex; min-height: 0; }
.left { width: 1368px; display: flex; flex-direction: column; }
.map { position: relative; height: 549px; overflow: hidden; flex: none; }
.canvas { position: absolute; inset: 0; }
.labels text { font: 700 11px "Open Sans", "Noto Sans CJK SC", sans-serif; fill: #666; stroke: #fff; stroke-width: 2.500px; stroke-linejoin: round; paint-order: stroke; text-anchor: middle; }
.labels text.big { font-size: 12px; }
.cluster text { font-size: 12px; fill: #333; text-anchor: middle; }
.toolbar { position: absolute; left: 0; top: 0; width: 100%; height: 51px; background: #ddd; }
.inner-shadow { position: absolute; inset: 0; box-shadow: inset 0 0 13px rgba(0, 0, 0, .55); }
.search { position: absolute; left: 9px; top: 15px; display: flex; width: 283px; height: 25px; border: 1px solid #ccc; border-radius: 4px; background: #fff; overflow: hidden; }
.addon { width: 27px; background: #eee; border-right: 1px solid #ccc; color: #888; padding: 6px 0 0 6px; }
.field { padding-left: 6px; font-size: 14px; line-height: 25px; color: #999; }
.split { position: absolute; left: 643px; top: 0; z-index: 2; display: flex; width: 101px; height: 30px; border-radius: 4px; background: linear-gradient(#d9534f, #bd362f); border: 1px solid rgba(120, 30, 30, .35); color: #fff; }
.split-main { width: 76px; padding-left: 11px; font-size: 14px; line-height: 29px; border-right: 1px solid #a83430; text-shadow: 0 -1px 0 rgba(0, 0, 0, .25); }
.split-caret { padding: 12px 0 0 8px; }
.split-caret i { display: block; width: 0; border: 3.500px solid transparent; border-top-color: #fff; border-bottom: 0; }
.layers { position: absolute; left: 1322px; top: 15px; width: 36px; height: 36px; border-radius: 5px; background: #fff; box-shadow: 0 1px 5px rgba(0, 0, 0, .4); padding: 4px; }
.tools { position: absolute; left: 9px; top: 50px; display: flex; flex-direction: column; gap: 10px; }
.tool-group { width: 26px; border-radius: 4px; background: #fff; box-shadow: 0 1px 5px rgba(0, 0, 0, .65); color: #222; }
.tool-group.wide { width: 27px; }
.tool-group span { display: flex; height: 26px; align-items: center; justify-content: center; }
.tool-group span.sign { padding-top: 2px; }
.tool-group span + span { border-top: 1px solid #ccc; height: 27px; }
.slide-label { position: absolute; top: 487px; height: 24px; font-size: 14px; line-height: 28px; background: linear-gradient(#ccc, #aaa); color: #333; }
.slide-label.start { left: 15px; width: 44px; padding-left: 6px; }
.slide-label.end { left: 1269px; width: 86px; text-align: center; }
.slide-label.end::after { content: ""; position: absolute; left: 38px; top: 24px; border: 5px solid transparent; border-top-color: #aaa; border-bottom: 0; }

.bottom { flex: 1; display: flex; min-height: 0; }
.panel { width: 660px; padding: 8px 0 0 7px; }
.tabs { display: flex; height: 20px; width: 659px; border-bottom: 1px solid #ddd; font-size: 11px; }
.panel:last-child { padding-left: 0; }
.tabs b { font-weight: 400; }
.tab { height: 20px; line-height: 19px; }
.tab.on { width: 120px; padding-left: 8px; border: 1px solid #ddd; border-bottom-color: #fff; border-radius: 4px 4px 0 0; background: #fff; color: #555; line-height: 18px; }
.tab.feat { width: 97px; }
.tab.link { padding-left: 11px; color: #08c; }
.bar { display: flex; height: 34px; }
.bar-left { padding: 7px 0 0 5px; }
.share { width: 17px; height: 17px; margin-top: 6px; border-radius: 3px; background: #08c; padding: 2px; }
.page { width: 20px; height: 22px; margin-left: 10px; border: 1px solid #ddd; border-radius: 3px; background: #f5f5f5; color: #999; font-size: 11px; line-height: 20px; text-align: center; }
.swatch { width: 14px; height: 14px; border: 1px solid #000; border-radius: 3px; }
.orange { margin: 7px 0 0 10px; background: #ff7d00; }
.bar-right { align-items: center; height: 25px; margin-bottom: 9px; padding-left: 5px; font-size: 10px; }
.bar-right .two { margin-left: 5px; }
.bar-right i { margin: 0 3px 0 2.500px; }
.bar-right a { margin-left: 3px; color: #08c; font-weight: 700; }
.ic { width: 9px; height: 9px; }
.indigo { margin: 0 0 0 3px; background: #00f; }
.list { display: flex; width: 645px; height: 178px; }
.rows { width: 628px; padding: 5px 0 0 5px; border-bottom: 1px solid #ddd; box-shadow: 0 6px 5px -4px #eee; }
.track { width: 16px; border: solid #e2e2e2; border-width: 0 1px; background: linear-gradient(90deg, #f0f0f0, #fff); }
.row { display: flex; align-items: center; width: 611px; height: 23px; margin-bottom: 5px; padding-left: 11px; border-radius: 5px; font-size: 10px; color: #222; }
.row.globe span { margin-left: 3px; }
.row.blue { background: #add8e6; }
.row.violet { background: #b1b0fe; }
.mover-col { position: relative; width: 48px; }
.bottom > .panel:first-child { width: 653px; }
.mover { display: flex; flex-direction: column; align-items: center; justify-content: space-between; width: 23px; height: 60px; margin-top: 111px; padding: 9px 0 6px; border-radius: 5px; background: #ededed; }
.grip-mid { position: absolute; left: 5px; top: 0; width: 49px; height: 6px; background: #ddd; }

.gutter { width: 6px; padding-top: 377px; background: #fff; }
.grip-side { height: 50px; background: #ddd; }

.side { flex: 1; background: #666; padding: 0 6px 0 10px; min-height: 0; overflow: hidden; }
.params { height: 557px; padding: 0 5px; border-radius: 0 0 5px 5px; background: #333; color: #fff; overflow: hidden; font-size: 12px; -webkit-text-stroke: .25px #fff; }
.param { display: grid; grid-template-columns: 95px 1fr; column-gap: 11px; padding: 5px 5px 3px; line-height: 20px; border-bottom: 1px solid #ddd; white-space: normal; word-break: break-all; letter-spacing: -.1px; }
.param:last-child { border-bottom: 0; }
.param.first { margin-top: -20px; height: 49px; white-space: nowrap; }
.file em { margin-left: 23px; }
.alert { display: flex; justify-content: space-between; height: 71px; margin-top: 20px; padding: 15px 15px 0 14px; border: 1px solid #d6e9c6; border-radius: 4px; background: #dff0d8; color: #468847; }
.alert-main { width: 364px; }
.alert-title { display: flex; gap: 4px; align-items: center; height: 20px; font-size: 17px; font-weight: 700; border-bottom: 1px solid #888; }
.alert-text { font-size: 14px; line-height: 23px; }
.alert-x { margin-top: 5px; color: #b2c3ac; }
.acc { margin-top: 20px; border-radius: 5px; overflow: hidden; }
.acc-head { display: flex; justify-content: space-between; align-items: center; height: 30px; padding: 1px 9px 0 10px; background: #ae9e96; color: #fff; font-size: 16px; font-weight: 700; }
.acc-body { display: flex; height: 37px; padding: 6px 5px 0; border-top: 1px solid #777; background: #333; color: #fff; font-size: 14px; line-height: 23px; }
.map-btn { display: flex; align-items: center; gap: 3px; width: 144px; height: 26px; margin-left: 13px; padding-left: 11px; border-radius: 2px; background: linear-gradient(#fff, #e6e6e6); color: #333; font-size: 12px; }

.popup { position: absolute; width: 440px; padding: 20px 20px 0; border-radius: 12px; background: #fff; box-shadow: 0 3px 14px rgba(0, 0, 0, .45); font-size: 12px; }
.popup::after { content: ""; position: absolute; left: 207px; bottom: -12.500px; border: 13px solid transparent; border-top-color: #fff; border-bottom: 0; }
.p-right { left: 751px; top: 199px; height: 263px; }
.p-left { left: 49px; top: 476px; height: 117px; padding-top: 14px; }
.popup-title { width: 400px; border-bottom: 1px solid #777; color: #94541e; font-size: 14px; font-weight: 700; }
.p-right .popup-title { margin-top: -6px; height: 21px; line-height: 21px; }
.p-left .popup-title { height: 21px; line-height: 21px; }
.popup-x { position: absolute; right: 8px; top: 8px; color: #c3c3c3; }
.meta { text-align: right; line-height: 20px; }
.m1 { width: 156px; margin-top: 53px; }
.m2 { width: 205px; }
.m3 { width: 149px; display: flex; justify-content: flex-end; margin-top: 70px; height: 20px; }
.published { display: flex; gap: 3px; align-items: center; height: 20px; margin-top: 11px; }
.btns { display: flex; width: 313px; height: 21px; border: 1px solid #c9c9c9; border-radius: 4px; overflow: hidden; font-size: 10.500px; }
.p-left .btns { margin-top: 15px; }
.p-right .btns { margin-top: 9px; }
.btn { display: flex; align-items: center; padding-left: 6px; background: linear-gradient(#fff, #e8e8e8); border-left: 1px solid #ccc; white-space: nowrap; }
.btn svg { width: 9px; height: 9px; margin-right: 3px; }
.btn.info { border-left: 0; background: linear-gradient(#54b9d8, #2f96b4); color: #fff; }
.btn.info svg { width: 10px; }
.btn.off { background: #ededed; color: #7b7b7b; }
.w1 { width: 72px; }
.w2 { width: 71px; }
.w3 { width: 80px; }
.w4 { flex: 1; }

.dialog { position: absolute; left: 473px; top: 230px; width: 442px; height: 339px; border-radius: 5px; background: #ededed; box-shadow: 0 16px 40px rgba(0, 0, 0, .65), 0 0 1px 1px rgba(0, 0, 0, .3); color: #000; font: 13px "Noto Sans", "Open Sans", sans-serif; }
.titlebar { position: relative; display: flex; justify-content: center; height: 22px; line-height: 22px; border-radius: 5px 5px 0 0; border-bottom: 1px solid #6c6c6c; background: linear-gradient(#e6e6e6, #b2b2b2); color: #444; }
.lights { position: absolute; left: 8px; top: 5px; display: flex; gap: 8px; }
.lights i { width: 12px; height: 12px; border-radius: 50%; border: 1px solid #8a8a8a; background: radial-gradient(circle at 50% 75%, #f4f4f4, #c2c2c2); }
.lights .red { border-color: #8f2f2c; background: radial-gradient(circle at 50% 25%, #ffc4c0 5%, #e4504f 45%, #c02c2c); }
.d-body { padding: 0 20px 0 14px; }
.d-line { display: flex; height: 20px; line-height: 20px; }
.l1 { margin-top: 12px; }
.l2 { margin: 7px 0 0 2px; align-items: center; gap: 5px; }
.l3 { margin: 4px 0 0 19px; }
.l4 { margin-left: 19px; }
.l5 { margin: 11px 0 0 11px; }
.gap7 { margin-left: 7px; }
.gap6 { margin-left: 6px; }
.group { width: 402px; height: 133px; margin: -1px 0 0 6px; padding: 18px 9px 0 11px; border: 1px solid #cbcbcb; border-radius: 4px; background: #e4e4e4; box-shadow: inset 0 1px 2px rgba(0, 0, 0, .08); }
.opt { display: flex; align-items: center; height: 21px; }
.o2 { margin-top: 7px; }
.o3 { margin-top: 13px; }
.radio { width: 16px; height: 16px; margin-right: 3px; border: 1px solid #888; border-radius: 50%; background: linear-gradient(#e9e9e9, #fff); }
.radio.on { border-color: #3a73b8; background: radial-gradient(circle, #111 2.500px, #9fd0fa 3.300px, #d7ecff); box-shadow: 0 0 2px 2px #7fb0e4; }
.check { width: 14px; height: 14px; margin: 0 5px 0 0; border: 1px solid #8c8c8c; border-radius: 3px; background: linear-gradient(#f2f2f2, #fff); }
.select { display: flex; align-items: center; justify-content: space-between; width: 294px; height: 21px; margin-left: 3px; padding: 0 6px 0 8px; border: 1px solid #8d8d8d; border-radius: 4px; background: linear-gradient(#fff, #f2f2f2 60%, #fff); }
.actions { display: flex; justify-content: flex-end; gap: 13px; margin: 12px 0 0; }
.push { display: flex; align-items: center; justify-content: center; height: 21px; padding-bottom: 2px; border: 1px solid #8d8d8d; border-radius: 4px; background: linear-gradient(#fff, #f0f0f0 60%, #fff); }
.cancel { width: 77px; }
.ok { width: 79px; border-color: #4a56a8; background: linear-gradient(#bcd5f4, #87b7ee 48%, #6aa6ee 52%, #b4dcfc); }
</style>
